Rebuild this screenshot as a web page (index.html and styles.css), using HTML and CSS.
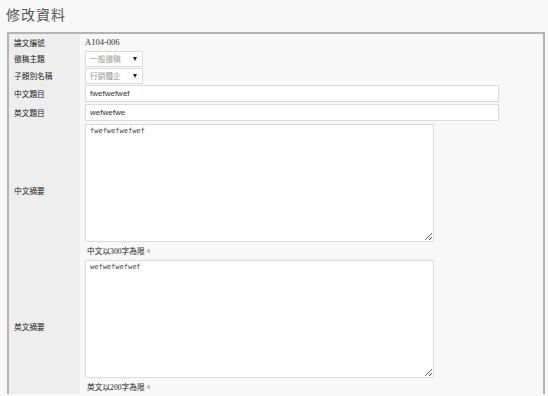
FILE: index.html
```html
<!DOCTYPE html>
<html>
<head>
	<meta charset="utf-8">
	<title>修改資料</title>
	<link rel="stylesheet" href="styles.css">
</head>
<body>
	<h1 class="title">修改資料</h1>
	<table class="form">
		<tr class="row-text">
			<th>論文編號</th>
			<td class="serial">A104-006</td>
		</tr>
		<tr class="row-select">
			<th>徵稿主題</th>
			<td><span class="select">一般徵稿</span></td>
		</tr>
		<tr class="row-select">
			<th>子類別名稱</th>
			<td><span class="select">行銷體企</span></td>
		</tr>
		<tr class="row-input">
			<th>中文題目</th>
			<td><input class="input" type="text" value="fwefwefwef"></td>
		</tr>
		<tr class="row-input">
			<th>英文題目</th>
			<td><input class="input" type="text" value="wefwefwe"></td>
		</tr>
		<tr class="row-area">
			<th>中文摘要</th>
			<td>
				<textarea class="area">fwefwefwefwef</textarea>
				<div class="hint">中文以300字為限。</div>
			</td>
		</tr>
		<tr class="row-area">
			<th>英文摘要</th>
			<td>
				<textarea class="area">wefwefwefwef</textarea>
				<div class="hint">英文以200字為限。</div>
			</td>
		</tr>
	</table>
</body>
</html>
```

FILE: styles.css
```css
	body{
		margin: 0;
		padding: 0 3px 0 7px;
		background: #f8f8f8;
		font-family: "Liberation Serif", "Noto Sans CJK TC", serif;
		color: #333;
	}
	.title{
		margin: 0 0 0 -1px;
		padding: 4px 0 0 0;
		height: 28px;
		font-family: "Noto Sans CJK TC", sans-serif;
		font-size: 14px;
		font-weight: normal;
		color: #555;
		letter-spacing: 1px;
	}
	.form{
		width: 538px;
		border-collapse: collapse;
		border: 2px solid #b4b4b4;
		border-bottom: none;
		background: #f8f8f8;
	}
	.form th{
		width: 66px;
		padding: 0 0 0 5px;
		background: #eeeeee;
		text-align: left;
		font-weight: normal;
		font-size: 7.7px;
		color: #222;
		vertical-align: middle;
	}
	.form td{
		padding: 0 0 0 5px;
		font-size: 7.7px;
		vertical-align: top;
	}
	.row-text th, .row-text td{
		height: 16px;
		vertical-align: middle;
	}
	.serial{
		font-family: "Liberation Serif", serif;
		font-size: 8.5px !important;
		color: #333;
	}
	.row-select td{
		height: 17px;
		vertical-align: middle;
	}
	.select{
		display: block;
		position: relative;
		width: 52px;
		height: 14px;
		padding-left: 4px;
		border: 1px solid #dcdcdc;
		background: #fff;
		color: #999;
		font-family: "Noto Sans CJK TC", sans-serif;
		font-size: 7.7px;
		line-height: 14px;
	}
	.select::after{
		content: '';
		position: absolute;
		right: 5px;
		top: 5px;
		border-left: 2px solid transparent;
		border-right: 2px solid transparent;
		border-top: 4px solid #222;
	}
	.row-input td{
		height: 19px;
		vertical-align: middle;
	}
	.input{
		display: block;
		box-sizing: border-box;
		width: 414px;
		height: 17px;
		margin: 0;
		padding: 0 4px;
		border: 1px solid #dcdcdc;
		background: #fff;
		font-family: "Liberation Sans", sans-serif;
		font-size: 8px;
		color: #333;
	}
	.row-area td{
		padding-top: 2px;
	}
	.area{
		display: block;
		box-sizing: border-box;
		width: 349px;
		height: 118px;
		margin: 0;
		padding: 2px 4px;
		border: 1px solid #dcdcdc;
		background: #fff;
		font-family: "DejaVu Sans Mono", monospace;
		font-size: 7px;
		color: #444;
		resize: both;
	}
	.hint{
		height: 15px;
		padding: 1px 0 0 2px;
		line-height: 17px;
		font-size: 7.7px;
		color: #222;
	}
```
